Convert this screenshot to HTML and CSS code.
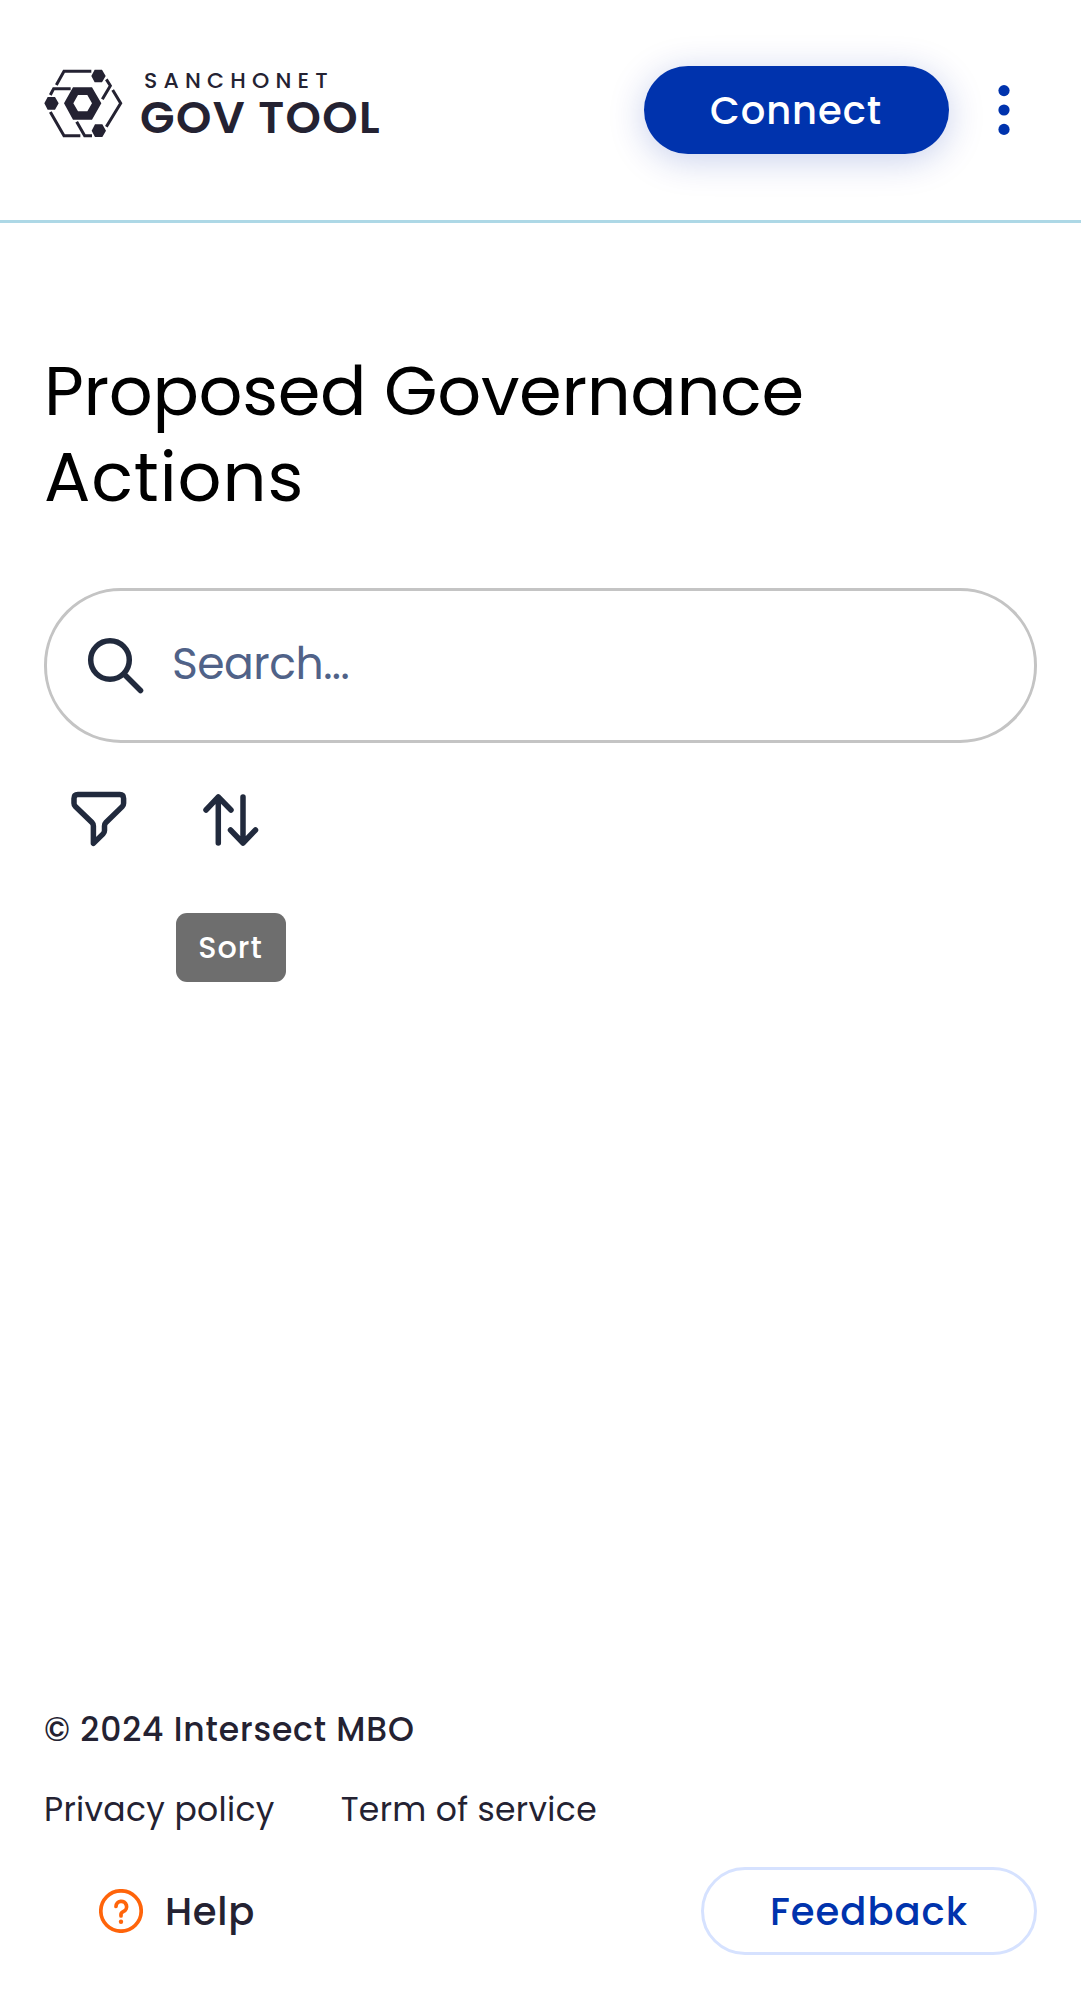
FILE: index.html
```html
<!DOCTYPE html>
<html lang="en">
<head>
<meta charset="utf-8">
<title>SanchoNet GovTool</title>
<link rel="stylesheet" href="styles.css">
</head>
<body>
<div class="page">
  <header class="header">
    <a class="logo">
      <svg class="logo-mark" viewBox="0 0 288 252" aria-hidden="true">
        <g fill="none" stroke="currentColor" stroke-width="9">
          <path d="M61 75 84 34H166M43 105 53 86H104M211 58 223 77 199 118M230 90 254 130 211 200M43 156 84 227H133M122 185 146 227H168"/>
        </g>
        <path fill="currentColor" fill-rule="evenodd" d="M84 130 111 82H168L196 130 168 179H111ZM112 130 126 154H154L168 130 154 105H126Z"/>
        <path fill="currentColor" d="M166 48 176 29H198L209 48 198 67H176ZM25 130 35 111H57L68 130 57 149H35ZM167 212 177 193H199L210 212 199 231H177Z"/>
      </svg>
      <span class="logo-text">
        <span class="logo-network">SANCHONET</span>
        <span class="logo-name">GOV TOOL</span>
      </span>
    </a>
    <div class="header-actions">
      <button class="btn btn-primary">Connect</button>
      <button class="icon-btn menu-btn" aria-label="Menu">
        <svg width="12" height="52" viewBox="0 0 12 52" fill="currentColor"><circle cx="6" cy="6.6" r="5.6"/><circle cx="6" cy="26" r="5.6"/><circle cx="6" cy="45.4" r="5.6"/></svg>
      </button>
    </div>
  </header>

  <main class="main">
    <h1 class="title">Proposed Governance <span class="title-end">Actions</span></h1>
    <div class="search">
      <svg class="search-icon" width="58" height="58" viewBox="0 0 58 58"><circle cx="24" cy="24" r="19.3"/><path d="M38 38 54.5 54.5"/></svg>
      <span class="placeholder">Search...</span>
    </div>
    <div class="tools">
      <button class="icon-btn tool" aria-label="Filter">
        <svg width="60" height="60" viewBox="0 0 60 60"><path d="M5 9.5Q5 5.6 8.9 5.6H50.8Q54.6 5.6 54.6 9.5V14.2Q54.6 16.2 53.2 17.6L36.9 33.5Q35.5 34.9 35.5 36.9V41.5Q35.5 43.5 34.1 44.9L24.4 54.4V36.9Q24.4 34.9 23 33.5L6.4 17.6Q5 16.2 5 14.2Z"/></svg>
      </button>
      <button class="icon-btn tool" aria-label="Sort">
        <svg width="60" height="60" viewBox="0 0 60 60"><path d="M17.3 54V8M5 21 17.3 8 30 21M42 8V54M29.5 41 42 54 54.5 41"/></svg>
        <span class="tooltip">Sort</span>
      </button>
    </div>
  </main>

  <footer class="footer">
    <p class="copyright">© 2024 Intersect MBO</p>
    <nav class="links"><a>Privacy policy</a><a>Term of service</a></nav>
    <div class="support">
      <a class="help">
        <svg width="44" height="44" viewBox="0 0 44 44"><circle cx="22" cy="22" r="20.2"/><path d="M17 17.5A5.3 5.3 0 1 1 24.6 22.4Q22 23.6 22 25.2V27"/><circle class="dot" cx="22" cy="32.7" r="2.2"/></svg>
        <span class="help-label">Help</span>
      </a>
      <button class="btn btn-outline">Feedback</button>
    </div>
  </footer>
</div>
</body>
</html>
```
FILE: styles.css
```css
* { box-sizing: border-box; }

body {
  margin: 0;
  background: #fff;
  color: #242232;
  font-family: Poppins, Inter, "Open Sans", sans-serif;
}

button {
  font: inherit;
  color: inherit;
  background: none;
  border: 0;
  padding: 0;
}

.page {
  display: flex;
  flex-direction: column;
  min-height: 1999px;
}

.header {
  display: flex;
  align-items: center;
  justify-content: space-between;
  height: 223px;
  padding: 0 23px 0 36px;
  border-bottom: 3px solid #add8e6;
}

.logo { display: flex; align-items: center; margin-bottom: 16px; }
.logo-mark { width: 96px; height: 84px; }

.logo-text {
  display: flex;
  flex-direction: column;
  gap: 1px;
  margin-left: 8px;
  padding-top: 7px;
}

.logo-network {
  margin-left: 4px;
  font-size: 22px;
  font-weight: 500;
  line-height: 24px;
  letter-spacing: 6.2px;
}

.logo-name {
  font-size: 45px;
  font-weight: 600;
  line-height: 48px;
  letter-spacing: 1.4px;
}

.header-actions { display: flex; align-items: center; }

.btn {
  display: flex;
  align-items: center;
  justify-content: center;
  height: 88px;
  border-radius: 44px;
  font-size: 38.5px;
  font-weight: 500;
}

.btn-primary {
  width: 305px;
  padding-right: 1px;
  background: #0033ad;
  color: #fff;
  letter-spacing: 0.9px;
  box-shadow: 0 6px 36px rgba(0, 40, 170, 0.22);
}

.btn-outline {
  width: 336px;
  padding-top: 1px;
  border: 3px solid #d6e2ff;
  color: #0033ad;
  letter-spacing: 1px;
}

.icon-btn { display: flex; align-items: center; justify-content: center; }
.menu-btn { width: 109px; height: 88px; color: #0033ad; }

.main { flex: 1; padding: 125px 44px 0; }

.title {
  margin: 0 0 68px;
  color: #000;
  font-size: 68.75px;
  font-weight: 400;
  line-height: 86px;
  letter-spacing: -0.35px;
}

.title-end { letter-spacing: 0.9px; }

.search {
  display: flex;
  align-items: center;
  height: 155px;
  padding: 0 39px 2px;
  border: 3px solid #c4c4c4;
  border-radius: 77px;
  color: #506288;
  font-size: 44px;
  letter-spacing: -0.5px;
}

.placeholder { padding: 0 0 3px 1px; }

.search svg, .tool svg {
  fill: none;
  stroke: #212a3d;
  stroke-width: 5.5;
  stroke-linecap: round;
  stroke-linejoin: round;
}

.search-icon { margin-right: 27px; }

.tools { display: flex; gap: 22px; margin-top: 21px; }
.tool { position: relative; width: 110px; height: 110px; }

.tooltip {
  position: absolute;
  top: 148.5px;
  left: -0.5px;
  width: 110px;
  height: 69px;
  border-radius: 11px;
  background: #6e6e6e;
  color: #fff;
  font-size: 30.25px;
  font-weight: 500;
  line-height: 69px;
  letter-spacing: 1px;
}

.footer { padding: 0 44px 44px; font-size: 33px; line-height: 40px; }
.copyright { margin: 0 0 40px; font-weight: 500; letter-spacing: 0.85px; }
.links { display: flex; gap: 66px; margin-bottom: 37px; letter-spacing: 0.33px; }

.support { display: flex; align-items: center; justify-content: space-between; }

.help {
  display: flex;
  align-items: center;
  gap: 22px;
  margin-left: 55px;
  font-size: 38.5px;
  font-weight: 500;
}

.help-label { padding-top: 1px; letter-spacing: 0.7px; }
.help svg { fill: none; stroke: #ff640a; stroke-width: 3.7; stroke-linecap: round; }
.help .dot { fill: #ff640a; stroke: none; }
```
